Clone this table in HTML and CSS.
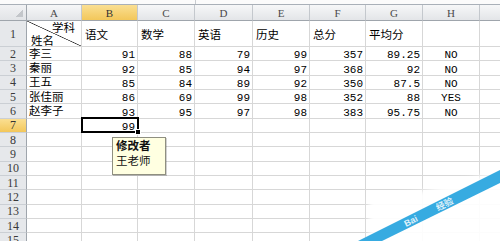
FILE: index.html
```html
<!DOCTYPE html>
<html lang="zh">
<head>
<meta charset="utf-8">
<title>成绩表</title>
<link rel="stylesheet" href="styles.css">
</head>
<body>
<div class="page">
  <div class="topbar"><div class="fx"></div></div>
  <div class="sheet">
    <div class="corner"></div>
    <div class="ch">A</div><div class="ch hl">B</div><div class="ch">C</div><div class="ch">D</div><div class="ch">E</div><div class="ch">F</div><div class="ch">G</div><div class="ch">H</div><div class="ch"></div>

    <div class="rh">1</div>
    <div class="c a1"><span class="top">学科</span><span class="bot">姓名</span></div>
    <div class="c zh hd">语文</div><div class="c zh hd">数学</div><div class="c zh hd">英语</div><div class="c zh hd">历史</div><div class="c zh hd">总分</div><div class="c zh hd">平均分</div><div class="c"></div><div class="c"></div>

    <div class="rh">2</div>
    <div class="c zh">李三</div><div class="c n">91</div><div class="c n">88</div><div class="c n">79</div><div class="c n">99</div><div class="c n">357</div><div class="c n">89.25</div><div class="c m">NO</div><div class="c"></div>

    <div class="rh">3</div>
    <div class="c zh">秦丽</div><div class="c n">92</div><div class="c n">85</div><div class="c n">94</div><div class="c n">97</div><div class="c n">368</div><div class="c n">92</div><div class="c m">NO</div><div class="c"></div>

    <div class="rh">4</div>
    <div class="c zh">王五</div><div class="c n">85</div><div class="c n">84</div><div class="c n">89</div><div class="c n">92</div><div class="c n">350</div><div class="c n">87.5</div><div class="c m">NO</div><div class="c"></div>

    <div class="rh">5</div>
    <div class="c zh">张佳丽</div><div class="c n">86</div><div class="c n">69</div><div class="c n">99</div><div class="c n">98</div><div class="c n">352</div><div class="c n">88</div><div class="c m">YES</div><div class="c"></div>

    <div class="rh">6</div>
    <div class="c zh">赵李子</div><div class="c n">93</div><div class="c n">95</div><div class="c n">97</div><div class="c n">98</div><div class="c n">383</div><div class="c n">95.75</div><div class="c m">NO</div><div class="c"></div>

    <div class="rh hl">7</div>
    <div class="c"></div><div class="c n sel">99</div><div class="c"></div><div class="c"></div><div class="c"></div><div class="c"></div><div class="c"></div><div class="c"></div><div class="c"></div>

    <div class="rh">8</div>
    <div class="c"></div><div class="c"></div><div class="c"></div><div class="c"></div><div class="c"></div><div class="c"></div><div class="c"></div><div class="c"></div><div class="c"></div>
    <div class="rh">9</div>
    <div class="c"></div><div class="c"></div><div class="c"></div><div class="c"></div><div class="c"></div><div class="c"></div><div class="c"></div><div class="c"></div><div class="c"></div>
    <div class="rh">10</div>
    <div class="c"></div><div class="c"></div><div class="c"></div><div class="c"></div><div class="c"></div><div class="c"></div><div class="c"></div><div class="c"></div><div class="c"></div>
    <div class="rh">11</div>
    <div class="c"></div><div class="c"></div><div class="c"></div><div class="c"></div><div class="c"></div><div class="c"></div><div class="c"></div><div class="c"></div><div class="c"></div>
    <div class="rh">12</div>
    <div class="c"></div><div class="c"></div><div class="c"></div><div class="c"></div><div class="c"></div><div class="c"></div><div class="c"></div><div class="c"></div><div class="c"></div>
    <div class="rh">13</div>
    <div class="c"></div><div class="c"></div><div class="c"></div><div class="c"></div><div class="c"></div><div class="c"></div><div class="c"></div><div class="c"></div><div class="c"></div>
    <div class="rh">14</div>
    <div class="c"></div><div class="c"></div><div class="c"></div><div class="c"></div><div class="c"></div><div class="c"></div><div class="c"></div><div class="c"></div><div class="c"></div>
    <div class="rh">15</div>
    <div class="c"></div><div class="c"></div><div class="c"></div><div class="c"></div><div class="c"></div><div class="c"></div><div class="c"></div><div class="c"></div><div class="c"></div>
  </div>

  <div class="comment"><b>修改者</b><span>王老师</span></div>

  <svg class="mark" width="500" height="241" viewBox="0 0 500 241" aria-hidden="true">
    <defs>
      <filter id="soft" x="-10%" y="-10%" width="120%" height="120%"><feGaussianBlur stdDeviation="2.5"/></filter>
    </defs>
    <polygon points="369,250 369,199 423,191 480,176 510,168 510,250" fill="#ffffff" fill-opacity="0.93" filter="url(#soft)"/>
    <polygon points="358,241 382,241 500,183 500,170" fill="#37abe1"/>
    <text transform="translate(406,227) rotate(-26.6)" class="marktext">Bai</text>
    <text transform="translate(438,211) rotate(-26.6)" class="marktext">经验</text>
  </svg>
</div>
</body>
</html>
```

FILE: styles.css
```css
html, body {
  margin: 0;
  padding: 0;
  background: #ffffff;
}

body {
  width: 500px;
  height: 241px;
  overflow: hidden;
}

.page {
  position: relative;
  width: 500px;
  height: 241px;
  overflow: hidden;
}

.topbar {
  height: 4px;
  display: flex;
  background: #fbfbfb;
  border-bottom: 1px solid #a9b0b8;
}

.fx {
  width: 195px;
  border-right: 1px solid #c9ccd0;
}

.sheet {
  display: grid;
  grid-template-columns: 27px 55px 56px 57px 58px 57px 56px 57px 57px 40px;
  grid-template-rows: 16px 26px repeat(14, 14.333px);
}

.sheet > div {
  box-sizing: border-box;
  min-width: 0;
  overflow: visible;
}

.corner {
  background:
    linear-gradient(135deg, transparent 50%, #c3c6ca 50%) right 3px bottom 3px / 7px 7px no-repeat,
    linear-gradient(#f1f2f4, #e2e4e7);
  border-right: 1px solid #9fa5ac;
  border-bottom: 1px solid #9fa5ac;
}

.ch {
  display: flex;
  align-items: center;
  justify-content: center;
  background: linear-gradient(#f6f7f8, #e3e5e8);
  border-right: 1px solid #c4c8cd;
  border-bottom: 1px solid #9fa5ac;
  font: 11px/12px "Liberation Serif", serif;
  color: #4a4a4a;
}

.rh {
  display: flex;
  align-items: center;
  justify-content: center;
  background: #e6e8eb;
  border-right: 1px solid #9fa5ac;
  border-bottom: 1px solid #cbcfd4;
  font: 12px/12px "Liberation Serif", serif;
  color: #3a3a3a;
}

.ch.hl,
.rh.hl {
  background: linear-gradient(#fadf92, #f3c75a);
  color: #333;
}

.c {
  display: flex;
  align-items: flex-end;
  padding: 0 2px;
  border-right: 1px solid #d7d7d7;
  border-bottom: 1px solid #d7d7d7;
  font: 11px/10px "Liberation Mono", "Noto Sans CJK SC", monospace;
  color: #000;
  white-space: nowrap;
}

.n {
  justify-content: flex-end;
}

.m {
  justify-content: center;
}

.zh {
  font: 11.5px/11.5px "Noto Sans CJK SC", sans-serif;
  padding-bottom: 1px;
}

.zh.hd {
  align-items: center;
  padding: 3px 2px 0 3px;
}

.a1 {
  flex-direction: column;
  justify-content: space-between;
  align-items: stretch;
  padding: 1px 6px 0 4px;
  font: 11.5px/11.5px "Noto Sans CJK SC", sans-serif;
  background: linear-gradient(to top right, transparent calc(50% - 0.7px), #2a2a2a 50%, transparent calc(50% + 0.7px));
}

.a1 .top {
  align-self: flex-end;
}

.a1 .bot {
  align-self: flex-start;
}

.sel {
  position: relative;
  z-index: 2;
}

.sel::after {
  content: "";
  position: absolute;
  top: -2px;
  left: -1px;
  right: -2px;
  bottom: -1px;
  border: 2px solid #000;
}

.sel::before {
  content: "";
  position: absolute;
  right: -4px;
  bottom: -3px;
  width: 4px;
  height: 4px;
  background: #000;
  border: 1px solid #fff;
  z-index: 3;
}

.comment {
  position: absolute;
  left: 112px;
  top: 137px;
  width: 54px;
  height: 38px;
  box-sizing: border-box;
  display: flex;
  flex-direction: column;
  padding: 0 3px;
  background: #ffffe1;
  border: 1px solid #8f8f80;
  box-shadow: 1px 1px 0 rgba(0, 0, 0, 0.18);
  font: 11.5px/15px "Noto Sans CJK SC", sans-serif;
  color: #111;
  z-index: 4;
}

.comment b {
  font-weight: 700;
}

.mark {
  position: absolute;
  left: 0;
  top: 0;
  z-index: 5;
  pointer-events: none;
}

.marktext {
  font: 700 9px "Liberation Sans", "Noto Sans CJK SC", sans-serif;
  fill: #ffffff;
  fill-opacity: 0.85;
}
```
